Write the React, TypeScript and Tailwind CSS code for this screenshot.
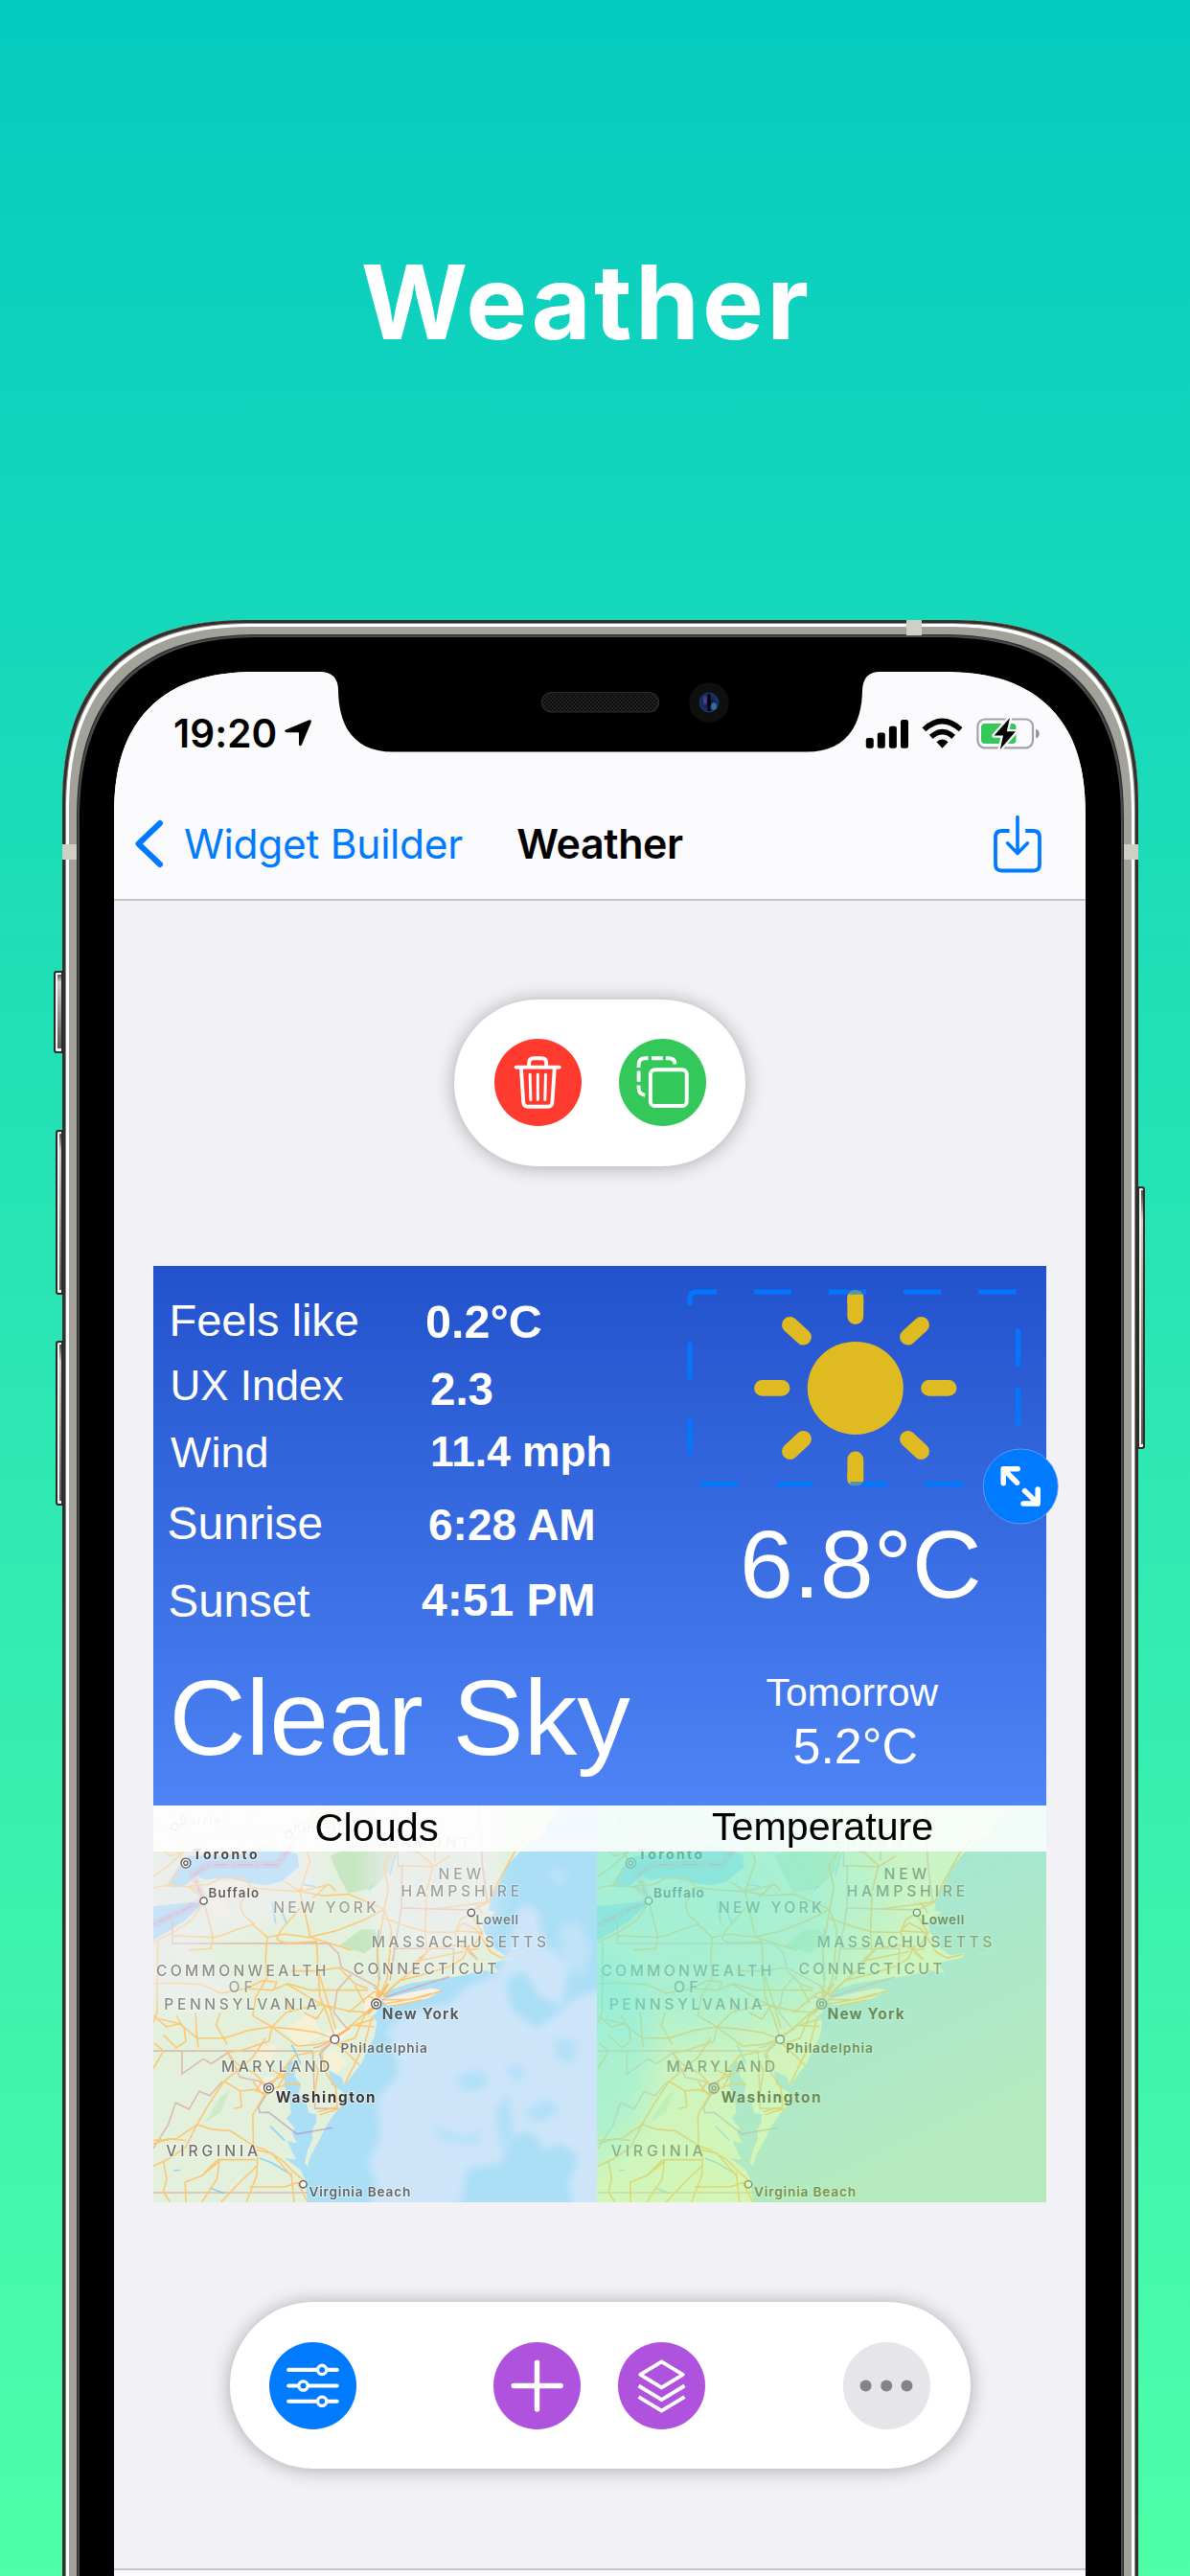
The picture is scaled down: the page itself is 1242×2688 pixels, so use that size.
import React from "react";

const sans = "font-['Inter','Liberation_Sans',sans-serif]";
const helv = "font-['Liberation_Sans',Arial,sans-serif]";

function LocationArrow() {
  return (
    <svg className="ml-[7.5px] h-[28px] w-[28px]" viewBox="0 0 28 28">
      <path d="M25.2 .6 Q28.600 -.6 27.6 2.8 L18 26 Q16.2 28.8 15 26 V14.200 Q15 13.200 14 13.200 L2 13.200 Q-1.200 12 1.200 10.400 Z" fill="#000" />
    </svg>
  );
}

function StatusIcons() {
  return (
    <svg className="h-[34px] w-[184px] translate-y-[0.500px]" viewBox="904 748 184 34">
      <g fill="#000">
        <rect x="904.8" y="769.5" width="8" height="10.8" rx="2.2" />
        <rect x="916.8" y="764" width="8" height="16.3" rx="2.2" />
        <rect x="928.9" y="757.2" width="8" height="23.1" rx="2.2" />
        <rect x="941" y="750.5" width="8" height="29.8" rx="2.2" />
      </g>
      <g fill="none" stroke="#000" strokeWidth="5.6">
        <path d="M965.4 760.8 Q984.5 743.3 1003.6 760.8" />
        <path d="M972.8 768.4 Q984.5 758 996.2 768.4" />
      </g>
      <path d="M978.4 773.8 Q984.5 768.2 990.6 773.8 L984.5 780.2 Z" fill="#000" />
      <rect x="1021.4" y="750" width="57.6" height="29.8" rx="7.5" fill="none" stroke="#a3a3a6" strokeWidth="2.2" />
      <path d="M1082.2 760.2 Q1085.6 761.6 1085.6 765 Q1085.6 768.6 1082.2 770 Z" fill="#8c8c90" />
      <rect x="1025" y="754.6" width="36.5" height="20.8" rx="4" fill="#34c759" />
      <path d="M1055 748.6 L1038.6 767 H1048 L1044.8 781.4 L1061 762.8 H1051.8 Z" fill="#000" stroke="#fbfbfd" strokeWidth="4.6" strokeLinejoin="round" paintOrder="stroke" />
    </svg>
  );
}

function ShareIcon() {
  return (
    <svg className="absolute right-[45.5px] top-[20.5px] h-[62px] w-[52px]" viewBox="0 0 52 62" fill="none" stroke="#007aff" strokeLinecap="butt">
      <path d="M17.6 17 H9.5 Q3 17 3 23.5 V52 Q3 58.5 9.5 58.5 H42.5 Q49 58.5 49 52 V23.5 Q49 17 42.5 17 H34.2" strokeWidth="3.8" />
      <path d="M26 2.5 V40" strokeWidth="3.6" strokeLinecap="round" />
      <path d="M15.6 29.8 L26 40.4 L36.4 29.8" strokeWidth="3.6" strokeLinecap="round" strokeLinejoin="round" />
    </svg>
  );
}

function RoundButton({ tone, label, children }: { tone: string; label: string; children: React.ReactNode }) {
  return (
    <button aria-label={label} className={`h-[91px] w-[91px] shrink-0 rounded-full ${tone}`}>
      <svg className="h-full w-full" viewBox="0 0 274 274" fill="none" stroke="#fff" strokeWidth="11.5" strokeLinecap="round" strokeLinejoin="round">
        {children}
      </svg>
    </button>
  );
}

const pill = "flex h-[174px] items-center rounded-full bg-white shadow-[0_1px_20px_rgba(0,0,0,0.3)]";

function TopPill() {
  return (
    <div className={`${pill} mt-[103px] w-[304px] gap-[39px] px-[41.5px]`}>
      <RoundButton tone="bg-[#ff3b30]" label="Delete">
        <path d="M68 89 H204" />
        <path d="M109 88 V76 Q109 61 123 61 H149 Q163 61 163 76 V88" />
        <path d="M84 92 L91 199 Q92 213 106 213 H167 Q181 213 182 199 L189 92" />
        <path d="M112 112 L114 191 M136.500 112 V191 M161 112 L159 191" strokeWidth="9" />
      </RoundButton>
      <RoundButton tone="bg-[#34c759]" label="Duplicate">
        <rect x="99" y="97" width="114" height="114" rx="14" strokeWidth="12" />
        <path d="M62 90 V81 Q62 61 82 61 H92 M102 61 H138 M147 61 H156 Q176 61 176 80 M62 101 V135 M62 146 V156 Q62 174 82 177" strokeLinecap="butt" />
      </RoundButton>
    </div>
  );
}

function BottomPill() {
  return (
    <div className={`${pill} mt-[104.5px] w-[773px] px-[41px]`}>
      <RoundButton tone="bg-[#007aff]" label="Adjust">
        <path d="M61 87 H147 M185 87 H213 M61 137 H88 M126 137 H213 M61 186 H147 M185 186 H213" strokeWidth="12.5" />
        <circle cx="166" cy="87" r="14" strokeWidth="10" />
        <circle cx="107" cy="137" r="14" strokeWidth="10" />
        <circle cx="166" cy="186" r="14" strokeWidth="10" />
      </RoundButton>
      <div className="ml-[143.5px] flex gap-[39px]">
        <RoundButton tone="bg-[#af52de]" label="Add">
          <path d="M137 64 V211 M64 137 H211" strokeWidth="16.500" />
        </RoundButton>
        <RoundButton tone="bg-[#af52de]" label="Layers">
          <path d="M137 61 L204 102 L137 143 L70 102 Z" />
          <path d="M65 137 L137 181 L209 137 M65 172 L137 216 L209 172" strokeLinecap="butt" />
        </RoundButton>
      </div>
      <div className="ml-[143.5px] flex">
        <RoundButton tone="bg-[#e5e5ea]" label="More">
          <g fill="#838388" stroke="none">
            <circle cx="71" cy="137" r="18" />
            <circle cx="136" cy="137" r="18" />
            <circle cx="200" cy="137" r="18" />
          </g>
        </RoundButton>
      </div>
    </div>
  );
}

const readings: { text: string; place: string }[] = [
  { text: "Feels like", place: "left-[16.5px] top-[33px] text-[47px]" },
  { text: "UX Index", place: "left-[17.5px] top-[103px] text-[44px]" },
  { text: "Wind", place: "left-[18px] top-[172px] text-[45px]" },
  { text: "Sunrise", place: "left-[14.5px] top-[245.5px] text-[48px]" },
  { text: "Sunset", place: "left-[15.5px] top-[326px] text-[47.5px]" },
  { text: "0.2°C", place: "left-[284px] top-[34px] text-[48.5px] font-bold" },
  { text: "2.3", place: "left-[289px] top-[105px] text-[47.5px] font-bold" },
  { text: "11.4 mph", place: "left-[289px] top-[172px] text-[44.3px] font-bold" },
  { text: "6:28 AM", place: "left-[287px] top-[247px] text-[46px] font-bold" },
  { text: "4:51 PM", place: "left-[280px] top-[325px] text-[48px] font-bold" },
  { text: "Clear Sky", place: "left-[16.5px] top-[417.5px] text-[111px]" },
  { text: "6.8°C", place: "left-[612px] top-[261.5px] text-[100.5px]" },
  { text: "Tomorrow", place: "left-[639.5px] top-[425px] text-[40.9px]" },
  { text: "5.2°C", place: "left-[667.5px] top-[475px] text-[52px]" },
  { text: "Clouds", place: "left-[168.5px] top-[565.5px] text-[41.5px] text-black" },
  { text: "Temperature", place: "left-[583px] top-[565.5px] text-[41.2px] text-black" },
];

function SunSelection() {
  return (
    <svg className="absolute left-[550px] top-[10px] h-[270px] w-[400px]" viewBox="710 1331 400 270">
      <g fill="#dfbb21" stroke="#dfbb21" strokeWidth="16.800" strokeLinecap="round">
        <ellipse cx="892.800" cy="1448.400" rx="50" ry="48.500" stroke="none" />
        <path d="M795.500 1448.400 H816 M969.600 1448.400 H990" />
        <path d="M824.500 1382.500 L838.500 1395.200 M961.500 1382.500 L947.500 1395.200 M824.500 1514.500 L838.500 1501.500 M961.500 1514.500 L947.500 1501.500" />
        <path d="M892.800 1356 V1373.500 M892.800 1523 V1541" />
        <path d="M884.400 1352 Q886 1346 892.800 1346 Q899.600 1346 901.200 1352 V1360 H884.400 Z M884.400 1537 H901.200 V1545 Q900 1550.500 892.800 1550.500 Q886 1550.500 884.400 1545 Z" stroke="none" />
      </g>
      <g fill="none" stroke="#007aff" strokeOpacity=".93" strokeWidth="5.200">
        <path d="M720 1362 V1355 Q720 1348.200 727 1348.200 H748" />
        <path d="M787 1348.200 H826 M943 1348.200 H982 M1021 1348.200 H1060.500" />
        <path d="M1062.600 1387 V1426.500 M1062.600 1448 V1488" />
        <path d="M1005 1548.600 H965.500 M848 1548.600 H809.500 M770 1548.600 H731" />
        <path d="M720 1518 V1479.500 M720 1440 V1401" />
        <path d="M865 1348.200 H884.400 M901.200 1348.200 H904 M926.500 1548.600 H901.200" />
        <path d="M884.400 1348.200 H901.200 M901.200 1548.600 H887.500" strokeOpacity=".6" />
      </g>
      <circle cx="1065.300" cy="1551" r="39" fill="#007aff" stroke="#6aa5f5" strokeWidth=".8" />
      <path d="M1062.200 1532.800 H1047.200 V1547.800 M1047.200 1532.800 L1061.500 1547.200 M1068 1569 H1083.200 V1554 M1083.200 1569 L1069.500 1555.600" fill="none" stroke="#fff" strokeWidth="5.500" strokeLinecap="round" strokeLinejoin="round" />
    </svg>
  );
}

type MapLabel = { t: string; x: number; y: number; w: number; s: number; k: "state" | "city" | "capital" | "faint"; o: number };

const mapLabels: MapLabel[] = [
  { t: "Barrie", x: 110, y: 102, w: 130, s: 38, k: "faint", o: 0.9 },
  { t: "Kingston", x: 467, y: 127, w: 188, s: 38, k: "faint", o: 0.9 },
  { t: "VERMONT", x: 722, y: 176, w: 298, s: 45, k: "faint", o: 0.9 },
  { t: "Toronto", x: 152, y: 210, w: 202, s: 42, k: "capital", o: 0.9 },
  { t: "Buffalo", x: 201, y: 332, w: 158, s: 40, k: "city", o: 0.88 },
  { t: "NEW YORK", x: 404, y: 377, w: 324, s: 47, k: "state", o: 0.62 },
  { t: "NEW", x: 922, y: 274, w: 134, s: 47, k: "state", o: 0.6 },
  { t: "HAMPSHIRE", x: 805, y: 327, w: 371, s: 47, k: "state", o: 0.62 },
  { t: "Lowell", x: 1039, y: 415, w: 134, s: 41, k: "city", o: 0.65 },
  { t: "MASSACHUSETTS", x: 712, y: 487, w: 548, s: 47, k: "state", o: 0.7 },
  { t: "CONNECTICUT", x: 655, y: 571, w: 450, s: 47, k: "state", o: 0.8 },
  { t: "COMMONWEALTH", x: 37, y: 576, w: 533, s: 47, k: "state", o: 0.78 },
  { t: "OF", x: 264, y: 627, w: 76, s: 47, k: "state", o: 0.62 },
  { t: "PENNSYLVANIA", x: 62, y: 680, w: 479, s: 47, k: "state", o: 0.8 },
  { t: "New York", x: 745, y: 711, w: 240, s: 46, k: "capital", o: 0.8 },
  { t: "Philadelphia", x: 615, y: 815, w: 272, s: 41, k: "city", o: 0.8 },
  { t: "MARYLAND", x: 241, y: 875, w: 341, s: 47, k: "state", o: 0.95 },
  { t: "Washington", x: 412, y: 973, w: 312, s: 46, k: "capital", o: 1 },
  { t: "VIRGINIA", x: 68, y: 1140, w: 288, s: 47, k: "state", o: 1 },
  { t: "Virginia Beach", x: 516, y: 1264, w: 318, s: 41, k: "city", o: 0.82 },
];

const labelFill = { state: "#75726d", city: "#4d4b49", capital: "#3a3837", faint: "#b3aeae" };
const tempFill = { state: "#5f5f5b", city: "#2c2c26", capital: "#1f1f18", faint: "#b3aeae" };
const labelWeight = { state: 500, city: 600, capital: 700, faint: 500 };

const roads = [
  "M28 265 L70 235 L120 190 L150 150 L240 120 L330 105 L450 120 L520 85 L580 55",
  "M150 150 L120 105 L60 120 L28 100 M120 190 L80 200 L28 160 M120 190 L100 150 L90 60 M150 165 L200 140 L300 150 L400 130",
  "M240 120 L260 70 L240 43 M330 105 L350 43 M28 300 L90 290 L150 300 L178 318 L186 341",
  "M75 290 L105 240 L128 222 L110 195 M160 318 L140 295 L200 290 L240 270 L310 268 L335 300 L420 308 L488 312 L560 325 L640 320 L700 345 L752 368",
  "M186 341 L215 455 L208 490 L140 495 M186 345 L150 400 L90 440 L28 470 M90 450 L210 455 L240 450 L290 430 L340 415 L385 455 L380 520 L385 580",
  "M335 300 L300 350 L310 385 L345 415 M488 312 L520 215 L495 150 L540 43 M488 312 L515 430 L520 455 L650 495 M488 312 L440 280 M488 312 L580 290 L600 310 M530 330 L575 290",
  "M385 455 L440 445 L515 455 L600 435 L690 400 L752 368 M415 460 L430 430 L488 365 M415 455 Q420 475 470 472 L540 468 L545 560 L570 640",
  "M752 368 L765 300 L750 230 L790 170 M752 368 L740 440 L730 500 L735 600 L727 640 M752 368 L775 430 L770 500 L760 590 L745 620 M752 395 L820 420 L885 438 L970 440 L1000 410",
  "M885 320 L880 440 L885 500 L850 550 L790 600 L750 635 M905 230 L885 310 M905 230 L860 190 L800 180 M810 230 L905 235 L960 200 M910 215 L920 100",
  "M1025 380 L990 400 L975 440 L985 480 L1015 495 L1050 490 M1025 380 L1040 410 L1060 440 L1035 480 M975 435 L1060 440 M1000 410 L1040 430 L1085 500 L1120 520 L1170 508 M1030 350 L1080 345 L1110 280 L1160 190 L1250 90",
  "M1060 380 L1040 350 L920 365 M1012 490 L1000 520 L960 545 L880 570 L800 590 L750 640 M1015 500 L1045 525 M870 515 L900 490 L965 480 M850 530 L1000 500",
  "M30 600 L90 598 L180 602 L240 630 L320 615 L400 620 L450 600 L520 620 L600 620 L700 620 M330 610 L370 590 L415 595 L405 620 M42 470 L40 690 L28 720",
  "M30 700 L70 735 L110 725 L165 770 L250 770 L330 745 L400 735 L470 742 L540 752 L590 770 M110 725 L50 710 M100 700 L125 740 L130 780 L100 800 L60 760 M165 770 L170 800 M160 690 L165 770 M238 690 L225 730 L260 790 M30 785 L60 810 L28 865",
  "M385 580 L350 640 L340 700 L400 735 L440 765 L480 795 L540 790 L590 775 M400 735 L445 690 L480 680 L555 665 L640 685 L700 690 M440 640 L460 690 M445 600 L530 650 L590 680",
  "M545 560 L550 640 L575 700 L596 765 M570 640 L600 740 M700 615 L660 600 L610 550 L540 560 L460 560 M660 605 L690 660 M570 665 L540 710 L500 690",
  "M727 663 L700 685 L665 715 L620 755 L596 775 L550 810 L470 825 L430 875 L390 925 M727 663 L690 700 L660 770 L600 790 M735 650 L700 640 L640 690 M727 650 L740 620 M700 640 L720 625 L760 635",
  "M740 665 L800 655 L880 640 L935 620 M745 650 L830 650 L900 630 M780 670 L870 650 M715 700 L690 790 L640 890 L628 915 M596 780 L650 830 L675 855 M660 730 L720 735 M640 735 L720 710",
  "M400 735 L390 780 L300 810 L260 815 L290 850 L345 880 L390 925 M380 770 L340 830 L250 905 L200 980 L165 1040 L100 1085 L28 1090 M345 880 L370 905 L350 935 L390 945 M400 870 L440 890 L420 920 M445 865 L430 905 M340 905 L370 945 L400 940",
  "M390 925 L340 1010 L342 1105 L355 1140 L352 1200 L320 1283 M250 905 L300 935 L305 985 L280 990 M300 935 L360 930 M390 910 L440 885 L470 870 M400 930 L450 912 L490 915",
  "M165 1040 L210 1055 L270 1060 L345 1108 L380 1120 L430 1150 L470 1190 L500 1215 M352 1120 L400 1130 L460 1200 M28 1170 L80 1145 L130 1110 L165 1040 M60 1155 L70 1210 L60 1250 L80 1283 M28 1100 L80 1085 L130 1090",
  "M130 1283 L128 1220 L180 1200 L230 1150 L350 1150 M180 1200 L235 1155 L228 1210 L180 1283 M352 1170 L300 1220 L240 1283 M330 1235 L440 1235 L500 1215 M460 1190 L470 1283 M480 1220 L512 1283",
  "M530 840 L545 870 L535 940 M555 815 L570 880 L600 925 L605 985 L545 1000 M550 1010 L610 990",
];

const urban = ["M690 640 L730 605 L745 640 L720 680 L690 700 Z", "M570 755 L630 735 L650 745 L600 790 L570 790 Z", "M350 900 L400 890 L420 925 L400 950 L360 945 Z"];

const coastline =
  "M0 0 H1330 L1290 80 L1262 100 L1250 140 L1210 155 L1165 200 L1130 240 L1110 290 L1088 325 L1080 370 L1102 378 L1060 408 L1066 440 L1088 462 L1098 488 L1130 512 L1175 503 L1168 519 L1122 528 L1088 535 L1112 566 L1060 558 L1000 575 L900 588 L830 600 L765 622 L745 648 L728 690 L716 702 L729 718 L722 765 L700 805 L680 850 L650 888 L628 918 L618 892 L578 872 L586 915 L622 938 L630 958 L612 992 L598 1004 L570 1045 L545 1095 L520 1140 L512 1172 L503 1160 L512 1120 L528 1085 L525 1060 L538 1035 L540 1008 L516 1004 L506 965 L482 948 L492 915 L470 888 L478 852 L455 838 L442 872 L438 920 L455 955 L460 1005 L445 1020 L470 1050 L464 1070 L478 1098 L448 1092 L476 1150 L440 1145 L490 1182 L505 1215 L515 1330 H0 Z";
const longIsland = "M745 650 L830 628 L900 614 L932 620 L890 645 L840 657 L760 668 Z";

function MapLabels({ temp }: { temp: boolean }) {
  const fills = temp ? tempFill : labelFill;
  return (
    <>
      <g stroke="#fff" strokeOpacity={temp ? 0.45 : 0.6} strokeWidth="6" strokeLinejoin="round" paintOrder="stroke" fontFamily="Inter, 'Liberation Sans', sans-serif">
        {mapLabels.map((l) => (
          <text key={l.t + l.y} x={l.x} y={l.y} fontSize={l.s} fontWeight={labelWeight[l.k]} textLength={l.w} lengthAdjust="spacing" fill={fills[l.k]} opacity={temp ? 1 : l.o}>
            {l.t}
          </text>
        ))}
      </g>
      <g fill="#fff" stroke={temp ? "#3a3a38" : "#5c5a58"} strokeWidth="4">
        {[[186, 341], [1025, 378], [597, 774], [498, 1227], [96, 110], [453, 134]].map(([x, y]) => (
          <circle key={x} cx={x} cy={y} r={x === 597 ? 13 : 11} opacity={y < 140 ? 0.5 : 1} />
        ))}
        {[[130, 223], [727, 663], [390, 926]].map(([x, y]) => (
          <g key={x}>
            <circle cx={x} cy={y} r="15" />
            <circle cx={x} cy={y} r="6.500" />
          </g>
        ))}
      </g>
    </>
  );
}

function CoastMap({ kind, box, size }: { kind: "clouds" | "temp"; box: string; size: string }) {
  const clouds = kind === "clouds";
  return (
    <svg className={`block ${size}`} viewBox={box} preserveAspectRatio="none">
      <defs>
        <filter id={`${kind}-soft`} x="-20%" y="-20%" width="140%" height="140%" colorInterpolationFilters="sRGB">
          <feGaussianBlur stdDeviation="12" />
        </filter>
        <filter id={`${kind}-soft-wide`} x="-20%" y="-20%" width="140%" height="140%" colorInterpolationFilters="sRGB">
          <feGaussianBlur stdDeviation="34" />
        </filter>
        <linearGradient id={`${kind}-warm`} x1="0" y1="0" x2=".55" y2="1">
          <stop offset="0" stopColor="#98efc4" />
          <stop offset=".55" stopColor="#aef3a8" />
          <stop offset="1" stopColor="#c6f884" />
        </linearGradient>
        <radialGradient id={`${kind}-cold`}>
          <stop offset="0" stopColor="#74eae8" />
          <stop offset=".6" stopColor="#74eae4" stopOpacity=".85" />
          <stop offset="1" stopColor="#74eae4" stopOpacity="0" />
        </radialGradient>
      </defs>

      <rect width="1460" height="1330" fill={clouds ? "#abdff6" : "#a4dcf4"} />
      <path fill={clouds ? "#e3f1dc" : "#eaf6dc"} d={coastline} />
      <g fill="#c6e6c0">
        <path d="M582 200 L700 150 L790 160 L768 250 L720 300 L640 318 L610 265 Z" />
        <path d="M612 480 L680 430 L722 430 L738 470 L690 505 Z" />
        <path d="M190 1035 L235 960 L268 930 L240 1000 Z" opacity=".7" />
      </g>
      <g fill="#f8f1d6" opacity=".85">
        <path d="M190 290 L320 272 L330 310 L250 330 L270 385 L220 390 Z" />
        <path d="M440 740 L520 690 L560 760 L480 800 Z" />
        <path d="M545 835 L590 800 L640 850 L600 880 Z" />
        <path d="M340 800 L420 790 L380 870 Z" />
      </g>
      <g fill="#9ad7f6">
        <path d="M72 296 L105 238 L140 200 L300 196 L370 165 L480 195 L485 235 L430 280 L380 292 L325 284 L250 268 L190 276 L160 262 L130 292 L100 300 Z" />
        <path d="M0 360 L150 345 L184 350 L130 400 L70 440 L0 480 Z" />
      </g>
      <g fill="#f8f1e6">
        {urban.map((d) => <path key={d} d={d} />)}
        <path d={longIsland} />
      </g>
      <g fill="none" stroke="#8fd3f5" strokeWidth="5">
        <path d="M788 190 L770 260 M718 290 L704 308 M400 345 L412 412 M430 372 L446 412 M498 290 L536 296 M735 430 L730 500 L738 590 M362 1145 L400 1160 L450 1190 M395 1045 L440 1090 M92 1185 L112 1182 M205 1238 L250 1255 M462 790 L490 850" />
      </g>
      <g fill="none" stroke="#d77c96">
        <path d="M465 165 L415 228 H205 L150 258 L165 290 L186 340 L28 415" strokeWidth="24" opacity=".25" />
        <path d="M575 50 L520 100 L465 165" strokeWidth="16" opacity=".2" />
        <path d="M465 165 L415 228 H205 L155 258 L165 290 L186 340 L28 415" strokeWidth="4.500" strokeDasharray="46 12 8 12" opacity=".7" />
      </g>
      <g fill="none" stroke="#d79a90" strokeWidth="4.800" opacity=".6">
        <path d="M88 400 V474 H576 L608 505 L618 550 L730 610 L735 640 M648 572 L605 620 L594 690 L635 740 M28 810 H528 L535 990 H610 M720 612 L760 640 L957 578 M790 43 L796 232 H808 L806 363 L790 460 L770 590 M806 363 L1030 370 L1075 345 L1060 230 L1050 43 M780 490 H970 L968 555 M965 480 L1010 485 L1045 525 M118 813 V882 L185 835 L210 850 L262 815 L300 892 L360 905 L385 925 M245 905 L205 950 L172 936 L140 992 L98 972 L75 1040 L28 1115 M28 1253 H510 M530 800 L545 798 L596 775" />
        <path d="M385 940 L358 985 L362 1003 L390 1002 L478 1070 L590 1050 M555 840 L550 820 L590 780" stroke="#a58fb8" />
      </g>
      <g fill="none" stroke={clouds ? "#fcc773" : "#fabb58"} strokeWidth="4.800" strokeLinejoin="round">
        {roads.map((d) => <path key={d} d={d} />)}
      </g>
      <g fill="none" stroke="#f9bb60" strokeWidth="7">
        <path d="M735 645 L765 600 M720 675 L700 695 M596 768 L645 738 M1012 492 L1020 480 M480 310 L496 306 M860 522 L878 512" />
      </g>

      {clouds ? (
        <>
          <g fill="#f4effb" filter="url(#clouds-soft-wide)" opacity=".5">
            <path d="M-40 -20 H300 L560 40 L560 330 L380 420 L160 480 L230 560 L300 640 L140 700 L-40 640 Z" />
            <path d="M700 20 H1100 V400 L1000 500 L900 560 L800 480 L700 420 Z" />
          </g>
          <g fill="#d2e6fa" filter="url(#clouds-soft)" opacity=".9">
            <path d="M1180 350 L1235 370 L1250 480 L1290 500 L1330 560 L1310 670 L1240 640 L1190 560 L1130 590 L1150 680 L1230 740 L1290 700 L1360 640 L1480 600 V1320 H1350 L1330 1230 L1360 1140 L1310 1100 L1260 1120 L1210 1060 L1150 1080 L1120 1160 L1010 1180 L1000 1240 L980 1340 H690 L730 1230 L700 1160 L740 1080 L730 960 L800 880 L780 800 L760 740 L840 690 L960 660 L1010 610 L1110 570 Z" />
            <path d="M1300 420 L1360 400 L1400 480 L1380 580 L1310 540 Z M1260 240 L1330 250 L1300 300 Z" opacity=".6" />
          </g>
          <g fill="#abdff6" filter="url(#clouds-soft)" opacity=".85">
            <path d="M980 885 L1060 870 L1080 910 L1040 935 L985 925 Z M1200 990 L1270 960 L1300 1000 L1250 1030 L1200 1020 Z M895 1040 L1000 1080 L1060 1060 L1040 1100 L940 1090 Z M1290 770 L1360 780 L1340 850 L1290 830 Z M1130 860 L1200 860 L1170 910 Z M1100 1000 L1140 940 L1160 1080 L1120 1130 Z" />
          </g>
          <MapLabels temp={false} />
        </>
      ) : (
        <>
          <MapLabels temp />
          <rect width="1460" height="1330" fill="url(#temp-warm)" fillOpacity=".5" />
          <ellipse cx="280" cy="340" rx="720" ry="520" fill="url(#temp-cold)" fillOpacity=".42" />
          <ellipse cx="0" cy="820" rx="250" ry="400" fill="url(#temp-cold)" fillOpacity=".4" />
        </>
      )}
    </svg>
  );
}

function WidgetCanvas() {
  return (
    <div className={`relative mt-[104px] h-[977px] w-[932px] leading-none text-white ${helv}`}>
      <div className="h-[563px] bg-[linear-gradient(to_bottom,#2252cc,#4e84f6)]" />
      <div className="flex h-[414px]">
        <CoastMap kind="clouds" box="28 43 1391 1240" size="h-full w-[463px]" />
        <CoastMap kind="temp" box="24 43 1406 1240" size="h-full w-[469px]" />
      </div>
      <div className="absolute inset-x-0 top-[563px] h-[48.5px] bg-white/85" />
      {readings.map((r) => (
        <span key={r.text} className={`absolute whitespace-nowrap ${r.place}`}>{r.text}</span>
      ))}
      <SunSelection />
    </div>
  );
}

function NotchHardware() {
  return (
    <svg className="absolute left-[210px] top-0 h-[90px] w-[594px]" viewBox="329 701 594 90">
      <defs>
        <pattern id="mesh" width="4" height="4" patternUnits="userSpaceOnUse">
          <rect width="4" height="4" fill="#0c0c0c" />
          <rect width="2" height="2" fill="#222222" />
          <rect x="2" y="2" width="2" height="2" fill="#222222" />
        </pattern>
        <radialGradient id="lens">
          <stop offset="0" stopColor="#06070f" />
          <stop offset=".45" stopColor="#15214d" />
          <stop offset="1" stopColor="#123a68" />
        </radialGradient>
      </defs>
      <path d="M329 700 V701 H334 Q352.500 701 353 720 C353.500 760 371 784.500 410 784.500 H842 C881 784.500 899.500 760 900 720 Q901 701 918 701 H923 V700 Z" fill="#000" />
      <rect x="565.500" y="722.500" width="122" height="20.500" rx="10.200" fill="url(#mesh)" stroke="#2c2c2c" strokeWidth="1.200" />
      <circle cx="740" cy="733" r="20.800" fill="#0f0f10" />
      <circle cx="740" cy="733" r="10.400" fill="url(#lens)" />
      <ellipse cx="736" cy="731" rx="2" ry="4.500" fill="#503a86" />
      <ellipse cx="745" cy="737" rx="3" ry="3.800" fill="#3f7fb4" opacity=".8" />
      <path d="M740 724 V742" stroke="#04050a" strokeWidth="3" />
    </svg>
  );
}

const sideKey = "absolute border-2 border-[#2a2a28] bg-linear-to-b from-[#55554f] via-[#cfcfc9] to-[#55554f] from-2% via-12% to-100% shadow-[inset_2px_2px_0_#f4f4f0,inset_0_-3px_0_#f4f4f0]";

export default function App() {
  return (
    <main className={`relative h-[2688px] w-[1242px] overflow-hidden bg-[linear-gradient(to_bottom,#04cbc0,#4effa8)] ${sans}`}>
      <header className="h-[647px] pt-[261.5px]">
        <h1 className="text-center text-[107.5px] leading-none font-bold tracking-[3.2px] text-white -translate-x-[9px]">Weather</h1>
      </header>

      <div className="relative ml-[65px] h-[2100px] w-[1122.5px] rounded-t-[170px] bg-black px-[54px] pt-[54px] shadow-[inset_0_0_0_3px_#33302c,inset_0_0_0_4px_#8d8a84,inset_0_0_0_7px_#ffffff,inset_0_0_0_15px_#a2a29b,inset_0_0_0_16px_#2a2a2a,inset_0_0_0_18px_#4a4a48] supports-[corner-shape:round]:rounded-t-[198px] supports-[corner-shape:round]:[corner-shape:superellipse(1.3)]">
        <i className={`${sideKey} top-[366px] -left-[9px] h-[86px] w-[10px] rounded-l-[3px]`} />
        <i className={`${sideKey} top-[532px] -left-[7px] h-[172px] w-[8px] rounded-l-[3px]`} />
        <i className={`${sideKey} top-[752px] -left-[7px] h-[172px] w-[8px] rounded-l-[3px]`} />
        <i className={`${sideKey} top-[591px] -right-[7px] h-[274px] w-[8px] rounded-r-[3px]`} />
        <i className="absolute top-0 left-[881px] h-[16px] w-[16px] bg-[#cfcfc6]" />
        <i className="absolute top-[234px] left-0 h-[16px] w-[15px] bg-[#cfcfc6]" />
        <i className="absolute top-[234px] right-0 h-[16px] w-[15px] bg-[#cfcfc6]" />

        <div className="relative flex h-[2046px] w-[1014px] flex-col overflow-hidden rounded-t-[128px] bg-[#f2f1f6] supports-[corner-shape:round]:rounded-t-[152px] supports-[corner-shape:round]:[corner-shape:superellipse(1.3)]">
          <NotchHardware />
          <div className="flex h-[128px] shrink-0 items-center justify-between bg-[#fbfbfd] pr-[46px] pl-[62px]">
            <div className="flex items-center text-[40.5px] leading-none font-semibold tracking-[0.1px] text-black">
              <span className="translate-y-[1px]">19:20</span>
              <LocationArrow />
            </div>
            <StatusIcons />
          </div>
          <nav className="relative flex h-[109px] shrink-0 items-center justify-center bg-[#fbfbfd] text-[42.5px] leading-none">
            <button className="absolute top-[26px] left-[20px] flex items-center text-[#007aff]">
              <svg className="h-[52px] w-[33px]" viewBox="0 0 33 52" fill="none" stroke="#007aff" strokeWidth="6" strokeLinecap="round" strokeLinejoin="round">
                <path d="M28 4 L5.500 25.500 L28 47" />
              </svg>
              <span className="ml-[20px] tracking-[-0.3px]">Widget Builder</span>
            </button>
            <span className="-translate-y-[3px] text-[43px] font-semibold tracking-[-0.4px] text-black">Weather</span>
            <ShareIcon />
          </nav>
          <div className="h-[1.500px] shrink-0 bg-[#c4c3c8]" />
          <div className="flex flex-col items-center">
            <TopPill />
            <WidgetCanvas />
            <BottomPill />
          </div>
          <div className="mt-[104px] grow border-t-2 border-[#c4c3c8] bg-[#fbfbfd]" />
        </div>
      </div>
    </main>
  );
}
